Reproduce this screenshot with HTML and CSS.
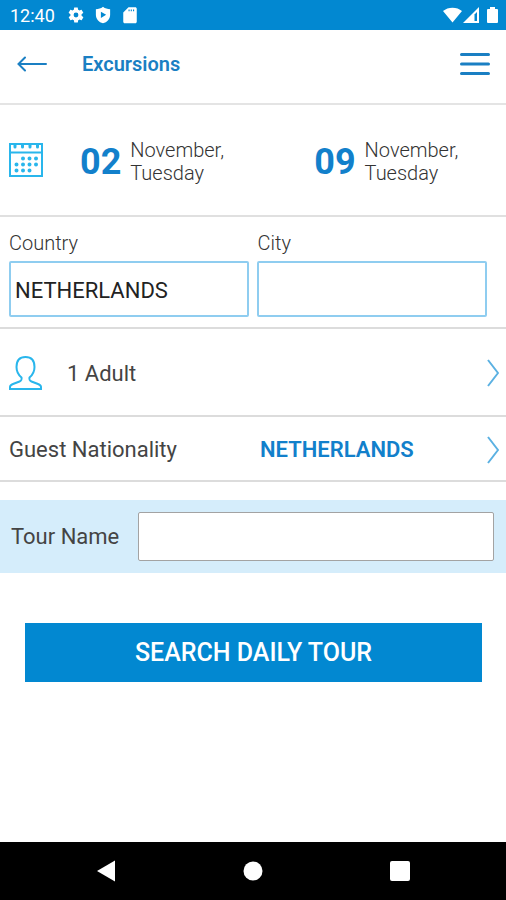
FILE: index.html
```html
<!DOCTYPE html>
<html lang="en">
<head>
<meta charset="utf-8">
<meta name="viewport" content="width=device-width, initial-scale=1">
<title>Excursions</title>
<link rel="stylesheet" href="styles.css">
</head>
<body>
<div class="status">
  <span class="clock">12:40</span>
  <svg class="status-icon" viewBox="0 0 24 24" width="18" height="18" aria-hidden="true"><path fill="currentColor" fill-rule="evenodd" d="M19.4 13c.1-.7.1-1.300 0-2l2.100-1.600c.2-.2.3-.5.1-.7l-2-3.400c-.1-.2-.4-.3-.6-.2l-2.500 1c-.5-.4-1.100-.7-1.700-1l-.4-2.600c0-.3-.2-.5-.4-.5h-4c-.3 0-.5.200-.5.400l-.4 2.700c-.6.200-1.200.6-1.700 1l-2.500-1c-.2-.1-.5 0-.6.200l-2 3.400c-.1.200-.1.500.1.700L4.600 11c-.1.700-.1 1.300 0 2l-2.100 1.600c-.2.200-.2.500-.1.700l2 3.400c.1.200.4.300.6.200l2.500-1c.5.400 1.100.7 1.700 1l.4 2.600c0 .3.200.5.500.5h4c.2 0 .4-.2.400-.4l.4-2.700c.6-.2 1.200-.6 1.700-1l2.500 1c.2.100.5 0 .6-.2l2-3.400c.1-.2.100-.5-.1-.7zM12 15.200a3.200 3.200 0 1 1 0-6.400 3.200 3.200 0 0 1 0 6.400z"/></svg>
  <svg class="status-icon" viewBox="0 0 24 24" width="18" height="18" aria-hidden="true"><path fill="currentColor" fill-rule="evenodd" d="M12 1C9 3.400 6 4.200 2.500 4.200v7.300C2.500 17 6.500 21.500 12 23c5.500-1.500 9.500-6 9.500-11.500V4.200C18 4.200 15 3.400 12 1zM9.200 7.500l7 4.300-7 4.300z"/></svg>
  <svg class="status-icon" viewBox="0 0 24 24" width="18" height="18" aria-hidden="true"><path fill="currentColor" fill-rule="evenodd" d="M19 1.500H10L3 8.500V21c0 1.100.9 2 2 2h14c1.100 0 2-.9 2-2V3.500c0-1.100-.9-2-2-2zM10 4.500h1.500v2.500H10zm3 0h1.500v2.500H13zm3 0h1.500v2.500H16z"/></svg>
  <svg class="signals" viewBox="0 0 56 18" width="56" height="18" aria-hidden="true">
    <path fill="currentColor" d="M1 5C6 .5 15 .5 20 5L10.500 16.500zM21 17L37 1v16z"/>
    <path class="signal-gap" d="M32.500 8.500v6.500h2.500V6z"/>
    <path fill="currentColor" d="M46 3h2V1h5v2h2q1 0 1 1v12q0 1-1 1h-9q-1 0-1-1V4q0-1 1-1z"/>
  </svg>
</div>

<header class="header">
  <button class="icon-button" type="button" aria-label="Back">
    <svg viewBox="0 0 30 16" width="30" height="16" aria-hidden="true"><path class="line" d="M29 8H1.500M8 1.500L1.500 8L8 14.500"/></svg>
  </button>
  <h1 class="title">Excursions</h1>
  <button class="icon-button menu" type="button" aria-label="Menu">
    <svg viewBox="0 0 30 24" width="30" height="24" aria-hidden="true"><path class="bars" d="M1.500 2.500h27M1.500 12h27M1.500 21.500h27"/></svg>
  </button>
</header>

<main class="main">
  <section class="dates">
    <svg class="calendar" viewBox="0 0 34 34" width="34" height="34" aria-hidden="true">
      <path class="outline" d="M1 1h32v32H1zM1 9.500h32"/>
      <path class="pins" d="M6 1v3M13.500 1v3M21 1v3M28.500 1v3"/>
      <path class="dots" d="M14 15.500h0M20.500 15.500h0M27 15.500h0M7.500 21.500h0M14 21.500h0M20.500 21.500h0M27 21.500h0M7.500 27.500h0M14 27.500h0M20.500 27.500h0"/>
    </svg>
    <button class="date" type="button"><span class="day">02</span><span class="month">November,<br>Tuesday</span></button>
    <button class="date" type="button"><span class="day">09</span><span class="month">November,<br>Tuesday</span></button>
  </section>

  <section class="places">
    <div class="field country">
      <label for="country">Country</label>
      <input id="country" type="text" value="NETHERLANDS">
    </div>
    <div class="field city">
      <label for="city">City</label>
      <input id="city" type="text">
    </div>
  </section>

  <button class="row guests" type="button">
    <svg class="person" viewBox="0 0 34 34" width="34" height="34" aria-hidden="true"><path class="outline" d="M16.500 1C10.500 1 7.500 5 7.500 11c0 4.500 2 8 5 10.500c.5 2.500 0 3-2 4L4 28c-2 .8-3 1.500-3 3v2h31v-2c0-1.500-1-2.200-3-3l-6.500-2.500c-2-1-2.500-1.500-2-4c3-2.500 5-6 5-10.500C25.500 5 22.500 1 16.500 1z"/></svg>
    <span>1 Adult</span>
    <svg class="chevron" viewBox="0 0 12 28" width="12" height="28" aria-hidden="true"><path d="M1 1l10 13L1 27"/></svg>
  </button>

  <button class="row nationality" type="button">
    <span class="row-label">Guest Nationality</span>
    <span class="value">NETHERLANDS</span>
    <svg class="chevron" viewBox="0 0 12 28" width="12" height="28" aria-hidden="true"><path d="M1 1l10 13L1 27"/></svg>
  </button>

  <div class="tour">
    <label for="tour">Tour Name</label>
    <input id="tour" type="text">
  </div>

  <button class="search" type="button">SEARCH DAILY TOUR</button>
</main>

<nav class="system-nav" aria-label="System">
  <button type="button" aria-label="Back"><svg viewBox="0 0 22 22" width="22" height="22" aria-hidden="true"><path fill="currentColor" d="M2 11L20 .5v21z"/></svg></button>
  <button type="button" aria-label="Home"><svg viewBox="0 0 22 22" width="22" height="22" aria-hidden="true"><circle fill="currentColor" cx="11" cy="11" r="9.500"/></svg></button>
  <button type="button" aria-label="Recent apps"><svg viewBox="0 0 22 22" width="22" height="22" aria-hidden="true"><rect fill="currentColor" x="1" y="1" width="20" height="20" rx="2"/></svg></button>
</nav>
</body>
</html>
```
FILE: styles.css
```css
* {
  box-sizing: border-box;
}

body {
  margin: 0;
  min-height: 100vh;
  display: flex;
  flex-direction: column;
  background: #fff;
  color: #444;
  font-family: Roboto, "Liberation Sans", sans-serif;
  font-size: 22px;
}

button,
input {
  font: inherit;
  color: inherit;
  margin: 0;
}

button {
  padding: 0;
  border: 0;
  background: none;
  text-align: left;
}

svg {
  display: block;
  flex: none;
}

.status {
  display: flex;
  align-items: center;
  height: 30px;
  padding: 0 8px 0 10px;
  background: #0288d1;
  color: #fff;
}

.clock {
  margin-right: 3px;
  font-size: 18px;
}

.status-icon {
  margin-left: 9px;
}

.signals {
  margin-left: auto;
}

.signal-gap {
  fill: #0288d1;
}

.header {
  display: flex;
  align-items: center;
  height: 75px;
  padding: 0 16px 6px 17px;
  border-bottom: 2px solid #e4e4e4;
  color: #1a7fc3;
}

.title {
  margin: 0 0 0 35px;
  font-size: 20px;
  font-weight: 600;
}

.menu {
  margin-left: auto;
}

.line,
.bars {
  fill: none;
  stroke: #1a7fc3;
  stroke-width: 2;
  stroke-linecap: round;
}

.bars {
  stroke-width: 3;
}

.main {
  flex: 1;
  display: flex;
  flex-direction: column;
}

.dates {
  display: grid;
  grid-template-columns: 71px 11fr 9fr;
  align-items: center;
  height: 112px;
  padding-left: 9px;
  border-bottom: 2px solid #e0e0e0;
}

.outline,
.pins,
.dots {
  fill: none;
  stroke: #29b6ec;
  stroke-width: 2;
}

.pins {
  stroke-width: 3;
  stroke-linecap: round;
}

.dots {
  stroke-width: 4;
  stroke-linecap: round;
}

.date {
  display: flex;
  align-items: center;
  gap: 9px;
  padding-top: 4px;
}

.day {
  color: #1280cb;
  font-size: 36px;
  font-weight: 700;
}

.month {
  color: #333;
  font-size: 20px;
  font-weight: 300;
  line-height: 23px;
}

.places {
  display: flex;
  gap: 8px;
  height: 112px;
  padding: 14px 19px 0 9px;
  border-bottom: 2px solid #dcdcdc;
}

.field {
  display: flex;
  flex-direction: column;
  gap: 6px;
  min-width: 0;
}

.country {
  flex: 241 1 0;
}

.city {
  flex: 230 1 0;
}

.field label {
  color: #333;
  font-size: 20px;
  font-weight: 300;
  line-height: 24px;
}

.field input {
  width: 100%;
  height: 56px;
  padding: 2px 4px 0;
  border: 2px solid #8fcdf0;
  border-radius: 2px;
  background: #fff;
  color: #222;
}

.row {
  display: flex;
  align-items: center;
  width: 100%;
  padding: 2px 7px 0 9px;
  border-bottom: 2px solid #dcdcdc;
}

.guests {
  gap: 24px;
  height: 88px;
}

.nationality {
  height: 65px;
}

.row-label {
  flex: 0 0 251px;
}

.value {
  color: #1280cb;
  font-weight: 600;
}

.chevron {
  margin-left: auto;
}

.chevron path {
  fill: none;
  stroke: #5bb1e2;
  stroke-width: 2;
}

.tour {
  display: flex;
  align-items: center;
  gap: 19px;
  height: 73px;
  margin-top: 18px;
  padding: 0 12px 0 11px;
  background: #d5edfb;
}

.tour input {
  flex: 1;
  min-width: 0;
  height: 49px;
  padding: 0 6px;
  border: 1px solid #a3a3a3;
  border-radius: 2px;
  background: #fff;
}

.search {
  height: 59px;
  margin: 50px 24px 24px 25px;
  background: #0288d1;
  color: #fff;
  font-size: 25px;
  font-weight: 500;
  text-align: center;
}

.system-nav {
  display: flex;
  justify-content: center;
  align-items: center;
  height: 58px;
  background: #000;
  color: #fff;
}

.system-nav button {
  display: flex;
  justify-content: center;
  width: 29%;
}
```
